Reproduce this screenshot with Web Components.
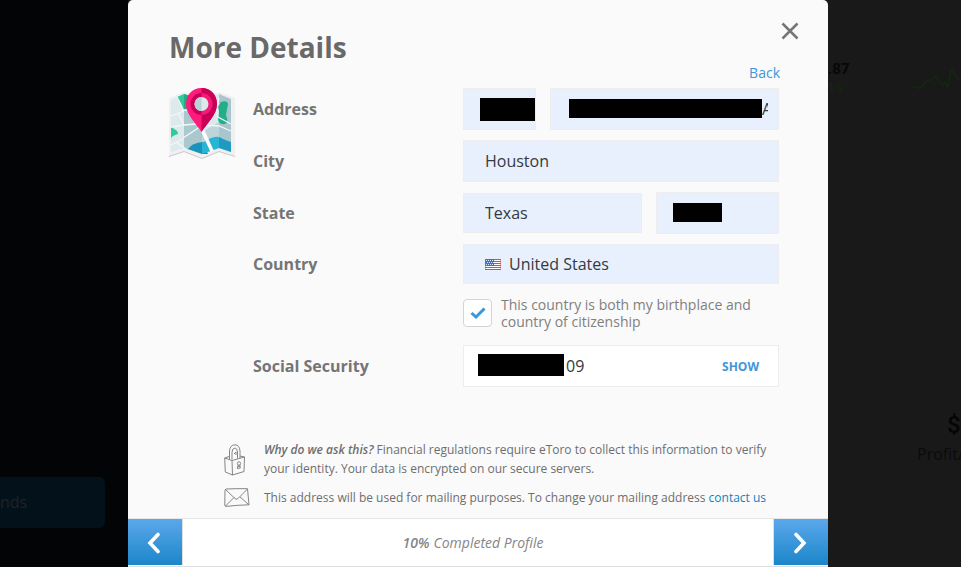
<!DOCTYPE html>
<html lang="en">
<head>
<meta charset="utf-8">
<meta name="viewport" content="width=device-width, initial-scale=1">
<title>More Details</title>
<style>
html,body{height:100%}
body{margin:0;font-family:"Open Sans","Noto Sans",sans-serif;background:#191919;overflow:hidden}
</style>
</head>
<body>
<profile-page></profile-page>
<script>
const define = (name, html) => {
  const template = document.createElement('template');
  template.innerHTML = '<style>*{box-sizing:border-box}</style>' + html;
  customElements.define(name, class extends HTMLElement {
    constructor() {
      super();
      this.attachShadow({ mode: 'open' }).append(template.content.cloneNode(true));
    }
  });
};

define('map-icon', `
<style>:host{display:block}svg{display:block;width:100%}</style>
<svg viewBox="0 0 66 71" aria-hidden="true">
  <path d="M0 10 15 4 33 10 51 4 66 10V69L50 64 33 71 15 64 0 69Z" fill="#f0f0f0"/>
  <path d="M0 68 15 63 33 70 50 63 66 68V69L50 64 33 71 15 64 0 69Z" fill="#c8cacb"/>
  <path d="M2 12 15 6V60L2 64Z" fill="#dce9ed"/>
  <path d="M15 6 33 12V66L15 60Z" fill="#abc8cf"/>
  <path d="M33 12 50 6V60L33 66Z" fill="#dce9ed"/>
  <path d="M50 6 62 11V64L50 60Z" fill="#a9c5cd"/>
  <path d="M33 44 50 34V60L33 66Z" fill="#bdd4da"/>
  <path d="M8 9 15 6 21 8 22 20 14 21Z" fill="#2fcb9a"/><path d="M15 6 21 8 22 20 15 21Z" fill="#24aa84"/>
  <path d="M2 39Q10 43 9 46Q2 48 2 51Z" fill="#2fcb9a"/>
  <path d="M52 14Q58 12 59 16L57 27Q60 35 56 36Q49 37 49 30Q51 23 49 19Z" fill="#22ae87"/>
  <path d="M19 61Q23 55 34 54L39 66 33 66Z" fill="#1894bb"/>
  <path d="M33 55 42 50Q48 48 50 49V60L33 66Z" fill="#27b4d5"/>
  <path d="M50 49Q58 53 62 54V64L50 60Z" fill="#209bc0"/>
  <g fill="none" stroke="#f1f7f8" stroke-width="1.300">
    <path d="M8 9Q13 18 14 22L21 23M2 28 15 23M9 25 15 37 2 39M15 37 27 36M14 51 2 57M7 54 17 61M14 50 34 37 50 38 62 43M50 10Q46 22 49 29L62 36"/>
    <path d="M32 39 43 63" stroke="#fff" stroke-width="3.500"/>
  </g>
  <path d="M32.500 0C23 0 17 7 17 16C17 27 27 35 32.500 44C38 35 48 27 48 16C48 7 42 0 32.500 0Z" fill="#ff1a7b"/>
  <path d="M32.500 0V44C38 35 48 27 48 16C48 7 42 0 32.500 0Z" fill="#ca0058"/>
  <circle cx="32.500" cy="16" r="11" fill="#ca0058"/>
  <path d="M32.500 5A11 11 0 0 1 32.500 27Z" fill="#f21b75"/>
  <circle cx="32.500" cy="16" r="7" fill="#dce9ed"/><path d="M32.500 9A7 7 0 0 0 32.500 23Z" fill="#b9d2d8"/>
</svg>`);

define('redaction-bar', `<style>:host{display:block;background:#000;flex:none;height:19px}</style>`);

define('us-flag', `
<style>:host{display:block;flex:none;width:16px}svg{display:block}</style>
<svg width="16" height="11" viewBox="0 0 16 11" aria-hidden="true" shape-rendering="crispEdges">
  <rect width="16" height="11" fill="#fff"/>
  <path d="M0 .5H16M0 2.500H16M0 4.500H16M0 6.500H16M0 8.500H16M0 10.500H16" stroke="#f0453f"/>
  <rect width="9" height="7" fill="#3f6fd0"/>
  <path d="M1 1.500H9M2 3.500H9M1 5.500H9" stroke="#dfe8fb" stroke-dasharray="1 1"/>
  <path d="M.5 0V11M15.500 0V11" stroke="#c5566c" opacity=".5"/>
</svg>`);

define('form-row', `
<style>
:host{display:grid;grid-template-columns:minmax(0,2fr) minmax(0,3fr);align-items:center;column-gap:0;font-size:16px}
@media(min-width:700px){:host{grid-template-columns:210px minmax(0,1fr)}}
.controls{display:flex;gap:14px;align-items:center;grid-column:2}
::slotted(label){font-weight:700;color:#757575}
</style>
<slot name="label"></slot><div class="controls"><slot></slot></div>`);

define('field-box', `
<style>
:host{display:flex;align-items:center;flex:1;min-width:0;height:42px;padding:0 21px;border:1px solid #ededed;background:#e8effd;font-size:16px;color:#343a40}
:host([short]){height:40px}
:host([plain]){background:#fff}
</style><slot></slot>`);

define('profile-form', `
<style>
:host{display:grid;grid-template-columns:66px minmax(0,1fr);column-gap:18px;align-items:start}
form{display:grid;gap:10px}
input,select{font:inherit;color:inherit;border:0;background:none;padding:0;margin:0;min-width:0;width:100%;outline:0;appearance:none;height:24px}
.number{flex:0 0 73px;padding:0 0 0 16px}.number redaction-bar{width:55px;height:23px}
.number input{width:0}
.street{padding:0 10px 0 18px}.street redaction-bar{flex:1}.street input{width:6px}
.street redaction-bar,.zip redaction-bar{margin-bottom:2px}
.zip{flex:0 0 123px;padding:0 16px}.zip redaction-bar{width:49px}
.country{gap:8px}
.ssn{padding:0 19px 0 14px;gap:2px}.ssn redaction-bar{width:86px;height:22px;margin-bottom:3px}
.ssn button{font:700 12px "Open Sans",sans-serif;color:#4096d9;background:none;border:0;padding:0}
.check{display:flex;align-items:center;gap:9px;min-height:38px;margin-bottom:3px;font-size:14px;line-height:17px;color:#808080}
.tick{display:grid;flex:none}
.tick>*{grid-area:1/1}
.tick input{width:29px;height:28px;background:#fff;border:1px solid #d4d4d4;border-radius:4px}
.tick svg{place-self:center;pointer-events:none;visibility:hidden}
.tick input:checked+svg{visibility:visible}
</style>
<map-icon></map-icon>
<form>
  <form-row><label slot="label" for="number">Address</label>
    <field-box class="number"><redaction-bar></redaction-bar><input id="number"></field-box>
    <field-box class="street"><redaction-bar></redaction-bar><input aria-label="Street" value="A"></field-box></form-row>
  <form-row><label slot="label" for="city">City</label>
    <field-box><input id="city" value="Houston"></field-box></form-row>
  <form-row><label slot="label" for="state">State</label>
    <field-box short><select id="state"><option>Texas</option></select></field-box>
    <field-box class="zip"><redaction-bar></redaction-bar><input aria-label="Postal code"></field-box></form-row>
  <form-row><label slot="label" for="country">Country</label>
    <field-box short class="country"><us-flag></us-flag><select id="country"><option>United States</option></select></field-box></form-row>
  <form-row><div class="check"><span class="tick"><input type="checkbox" id="citizen" checked><svg width="16" height="14" viewBox="0 0 16 14"><path d="M1.500 7 6 11 14.500 2.500" fill="none" stroke="#3498db" stroke-width="3"/></svg></span><label for="citizen">This country is both my birthplace and country of citizenship</label></div></form-row>
  <form-row><label slot="label" for="ssn">Social Security</label>
    <field-box plain class="ssn"><redaction-bar></redaction-bar><input id="ssn" value="09"><button type="button">SHOW</button></field-box></form-row>
</form>`);

define('info-note', `
<style>
:host{display:grid;grid-template-columns:26px minmax(0,1fr);column-gap:14px;font-size:12px;line-height:19px;color:#6e6e6e}
</style>
<slot name="icon"></slot><div><slot></slot></div>`);

define('dialog-header', `
<style>
:host{display:flex;justify-content:space-between;height:88px;padding:15px 22px 0 41px}
h1{margin:12px 0 0;font-size:28px;line-height:40px;font-weight:700;color:#696969}
.actions{display:flex;flex-direction:column;align-items:flex-end;gap:16px}
button{width:32px;height:32px;padding:0;border:0;background:none;display:grid;place-items:center}
a{margin-right:26px;font-size:14px;line-height:20px;color:#4096d9;text-decoration:none}
</style>
<h1>More Details</h1>
<div class="actions"><button aria-label="Close"><svg width="18" height="18" viewBox="0 0 18 18"><path d="M1.500 1.500 16.500 16.500M16.500 1.500 1.500 16.500" stroke="#757575" stroke-width="2.500"/></svg></button><a href="#">Back</a></div>`);

define('dialog-footer', `
<style>
:host{display:flex;align-items:stretch;height:49px;padding-bottom:1px;border-top:1px solid #e6e6e6;border-bottom:1px solid #dedede;background:#fff}
button{flex:none;width:54px;padding:2px 2px 0 0;border:0;background:linear-gradient(#5ba8eb,#1b86c9);display:grid;place-items:center}
p{flex:1;margin:0;padding:2px 10px 0 0;display:flex;gap:4px;align-items:center;justify-content:center;font-size:14px;line-height:20px;font-style:italic;color:#858585;border:solid #ddd;border-width:0 1px}
b{font-weight:600}
path{fill:none;stroke:#fff;stroke-width:3.600;stroke-linecap:round}
</style>
<button aria-label="Previous"><svg width="14" height="22" viewBox="0 0 14 22"><path d="M11 2.500 3 11 11 19.500"/></svg></button>
<p><b>10%</b><span>Completed Profile</span></p>
<button aria-label="Next"><svg width="14" height="22" viewBox="0 0 14 22"><path d="M3 2.500 11 11 3 19.500"/></svg></button>`);

define('details-dialog', `
<style>
:host{display:flex;flex-direction:column;background:#fafafa;border-radius:5px 5px 0 0;overflow:hidden}
profile-form{padding:0 49px 0 41px}
.notes{display:grid;gap:10px;padding:53px 55px 11px 96px;margin-bottom:auto}
a{color:#0b83c6;text-decoration:none}
b{font-weight:600;font-style:italic}
svg{display:block;fill:none;stroke:#858585;stroke-width:1;stroke-linejoin:round}
.lock{margin-top:4px}
</style>
<dialog-header></dialog-header>
<profile-form></profile-form>
<div class="notes">
  <info-note><svg class="lock" slot="icon" width="22" height="32" viewBox="0 0 22 32"><path d="M.7 14 8 16.500 8.500 31 1.300 28ZM8 16.500 20.500 13 20 27.500 8.500 31M.7 14 5 12.500M16 12 20.500 13M5.500 15V7Q6 1 11 .8Q15.500 1 16 7L16 14M8 15.500V8Q8.500 4 11 4Q13 4 13.500 8V14.500M10 10 12 8V11"/><circle cx="15" cy="19.500" r="1.700"/><path d="M14.200 21 13.200 24.500 16.300 24 15.800 20.800M14 22.500H16"/></svg><b>Why do we ask this?</b> Financial regulations require eToro to collect this information to verify your identity. Your data is encrypted on our secure servers.</info-note>
  <info-note><svg slot="icon" width="26" height="19" viewBox="0 0 26 19"><path d="M2 1Q13 .5 23.500 .7L25 16.800Q14 17 2 18.400Q.8 18.400 .8 17L1 2ZM1.500 1.500 11 10.500Q12.500 12 14 10.500L23.500 1M1.500 18 10 9.500M16 9 25 16.800"/></svg>This address will be used for mailing purposes. To change your mailing address <a href="#">contact us</a></info-note>
</div>
<dialog-footer></dialog-footer>`);

define('side-panel', `
<style>
:host{display:flex;flex-direction:column;background:#030405;overflow:hidden;padding:477px 23px 0 0}
button{height:51px;border:0;border-radius:0 6px 6px 0;background:#03111a;color:#202325;font:16px "Open Sans",sans-serif;text-align:left;padding:0 0 2px;overflow:hidden}
</style><button>nds</button>`);

define('portfolio-panel', `
<style>
:host{display:flex;flex-direction:column;background:#191919;overflow:hidden;padding-top:58px;color:#070707}
.quote{display:flex;justify-content:space-between;height:354px}
.quote b{display:block;font:700 15px/22px Roboto,sans-serif}.quote small{display:block;font:12px/16px Roboto,sans-serif;color:#13290f}
svg{fill:none;stroke:#13290f;stroke-width:1.500}
.total{padding-left:89px;white-space:nowrap;font-size:16px;line-height:30px;color:#0b0b0b}
.total b{display:block;padding-left:30px;font:500 24px/27px Roboto,sans-serif;color:#050505}
</style>
<div class="quote"><div><b>.87</b><small>1%</small></div>
<svg width="49" height="36" viewBox="0 0 49 36"><path d="M0 29H5L8 31 14 23 18 22 23 18 28 25 31 27 33 24 36 29 39 13 41 12 46 22 49 20"/></svg></div>
<div class="total"><b>$</b>Profit/</div>`);

define('profile-page', `
<style>
:host{display:grid;min-height:100vh;grid-template-columns:max(0px,calc((100% - 705px)/2)) minmax(0,700px) minmax(0,1fr)}
</style>
<side-panel></side-panel><details-dialog role="dialog"></details-dialog><portfolio-panel></portfolio-panel>`);
</script>
</body>
</html>
